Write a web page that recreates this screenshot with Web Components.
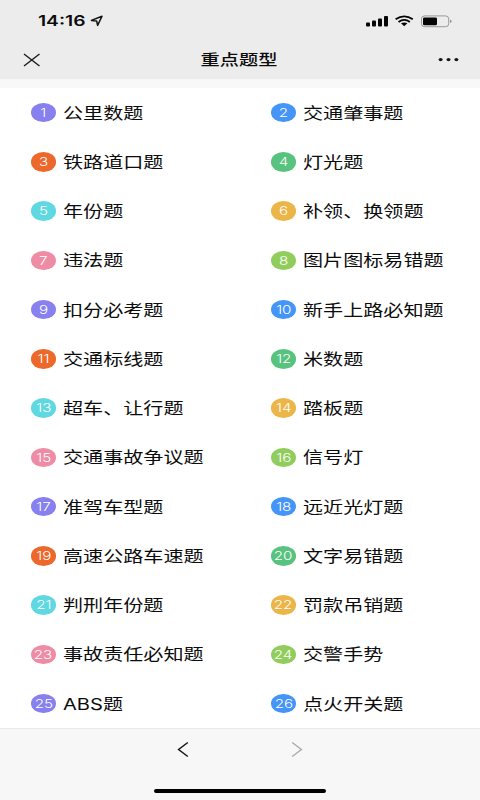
<!DOCTYPE html>
<html lang="zh-CN">
<head>
<meta charset="utf-8">
<title>重点题型</title>
<style>
html, body { margin: 0; height: 100%; }
body { font-family: Inter, "Noto Sans CJK SC", sans-serif; color: #0c0c0c; overflow: hidden; }
</style>
</head>
<body>
<exam-app></exam-app>
<script>
const define = (name, html, init) => customElements.define(name, class extends HTMLElement {
  constructor() {
    super();
    const t = document.createElement('template');
    t.innerHTML = html;
    this.attachShadow({ mode: 'open' }).appendChild(t.content.cloneNode(true));
  }
  connectedCallback() { if (init) init(this, this.shadowRoot); }
});

// Text set wider than its natural proportions
define('wide-text', `
<style>
:host { display: inline-block; white-space: nowrap; transform: scaleX(var(--stretch, 1.28)); transform-origin: var(--origin, left) center; }
</style><slot></slot>`);

define('status-bar', `
<style>
:host { display: flex; height: 41px; padding: 0 28px 0 38px; box-sizing: border-box; justify-content: space-between; align-items: center; }
.time { display: grid; grid-template-columns: 52px 14px; align-items: center; }
wide-text { font-size: 15px; font-weight: 600; line-height: 20px; --stretch: 1.28; padding-top: 1px; }
svg { display: block; }
</style>
<div class="time"><wide-text>14:16</wide-text>
<svg width="14" height="12" viewBox="0 0 14 12"><path d="M1.4 5.4 L12 1.2 L7.6 10.4 L6.6 5.9 Z" fill="none" stroke="#111" stroke-width="1.5" stroke-linejoin="round"/></svg></div>
<svg width="88" height="14" viewBox="0 0 88 14">
<g fill="#050505"><rect x="2" y="8.6" width="4" height="4" rx="1"/><rect x="8" y="6.6" width="4" height="6" rx="1"/><rect x="14" y="4.4" width="4" height="8.2" rx="1"/><rect x="20" y="2" width="4" height="10.6" rx="1"/>
<path d="M37 9.2 Q40.2 7.7 43.4 9.2 L40.2 12.3 Z"/></g>
<g fill="none" stroke="#050505" stroke-width="1.8"><path d="M31.6 5.3 Q40.2 -.6 48.8 5.3"/><path d="M34.5 8 Q40.2 3.9 45.9 8"/></g>
<rect x="57.5" y="1.9" width="27.2" height="10.8" rx="3" fill="none" stroke="#999" stroke-width="1"/>
<rect x="59" y="3.4" width="14" height="7.9" rx="1.4" fill="#050505"/>
<path d="M86.1 5.5 Q87.5 6 87.5 7.3 T86.1 9.1 Z" fill="#888"/></svg>`);

define('nav-bar', `
<style>
:host { display: grid; grid-template-columns: 60px 1fr 60px; height: 38px; align-items: center; }
h1 { margin: 0; text-align: center; font-size: 15px; font-weight: 500; line-height: 22px; --origin: center; padding-right: 1px; }
svg { display: block; }
.close { margin-left: 23px; }
.more { margin-left: 18px; }
</style>
<svg class="close" width="18" height="14" viewBox="0 0 18 14"><path d="M1 1 L16.5 13 M16.5 1 L1 13" stroke="#1a1a1a" stroke-width="1.4" fill="none"/></svg>
<h1><wide-text><slot></slot></wide-text></h1>
<svg class="more" width="22" height="6" viewBox="0 0 22 6"><g fill="#161616"><ellipse cx="2.6" cy="2.6" rx="2" ry="1.6"/><ellipse cx="10.5" cy="2.6" rx="2" ry="1.6"/><ellipse cx="18.4" cy="2.6" rx="2" ry="1.6"/></g></svg>`);

define('topic-item', `
<style>
:host { display: flex; align-items: center; gap: 7px; padding-left: 31px; }
.badge { flex: none; width: 25px; height: 19.4px; border-radius: 50%; display: flex; align-items: center; justify-content: center; color: #fff; font-size: 11.5px; font-weight: 300; line-height: 19px; --origin: center; --stretch: 1.32; }
.num { padding-top: 1.4px; }
.label { font-size: 15.7px; line-height: 24px; padding-top: 2px; }
</style>
<span class="badge"><wide-text class="num"></wide-text></span>
<wide-text class="label"><slot></slot></wide-text>`, (el, root) => {
  const n = +el.getAttribute('number');
  const colors = ['#8780ee', '#4495f7', '#ec682b', '#57c37e', '#60d8e2', '#ebb548', '#ef8ca5', '#91cd5c'];
  root.querySelector('.badge').style.background = colors[(n - 1) % 8];
  root.querySelector('.num').textContent = n;
});

define('topic-list', `
<style>
:host { display: grid; grid-template-columns: 240px 240px; grid-auto-rows: 49.25px; align-content: start; height: 640px; background: #fff; }
</style>`, (el, root) => {
  ['公里数题', '交通肇事题', '铁路道口题', '灯光题', '年份题', '补领、换领题', '违法题', '图片图标易错题', '扣分必考题', '新手上路必知题', '交通标线题', '米数题', '超车、让行题', '踏板题', '交通事故争议题', '信号灯', '准驾车型题', '远近光灯题', '高速公路车速题', '文字易错题', '判刑年份题', '罚款吊销题', '事故责任必知题', '交警手势', 'ABS题', '点火开关题'].forEach((name, i) => {
    const item = document.createElement('topic-item');
    item.setAttribute('number', i + 1);
    item.textContent = name;
    root.appendChild(item);
  });
});

define('bottom-bar', `
<style>
:host { display: flex; flex-direction: column; align-items: center; justify-content: space-between; height: 72px; box-sizing: border-box; border-top: 1px solid #e9e9e9; background: #f7f7f7; padding: 12px 0 7px; }
.arrows { display: flex; gap: 102px; }
svg { display: block; }
.home { width: 172px; height: 4px; border-radius: 2px; background: #000; }
</style>
<div class="arrows">
<svg width="12" height="17" viewBox="0 0 12 17"><path d="M10.8 1.5 L1.6 8.5 L10.8 15.5" fill="none" stroke="#151515" stroke-width="1.5"/></svg>
<svg width="12" height="17" viewBox="0 0 12 17"><path d="M1.2 1.5 L10.4 8.5 L1.2 15.5" fill="none" stroke="#aaa" stroke-width="1.4"/></svg>
</div><div class="home"></div>`);

define('exam-app', `
<style>
:host { display: flex; flex-direction: column; width: 480px; height: 800px; background: #f8f8f8; }
header { height: 79px; background: #ececec; }
main { padding-top: 9px; }
</style>
<header><status-bar></status-bar><nav-bar>重点题型</nav-bar></header>
<main><topic-list></topic-list></main>
<bottom-bar></bottom-bar>`);
</script>
</body>
</html>
